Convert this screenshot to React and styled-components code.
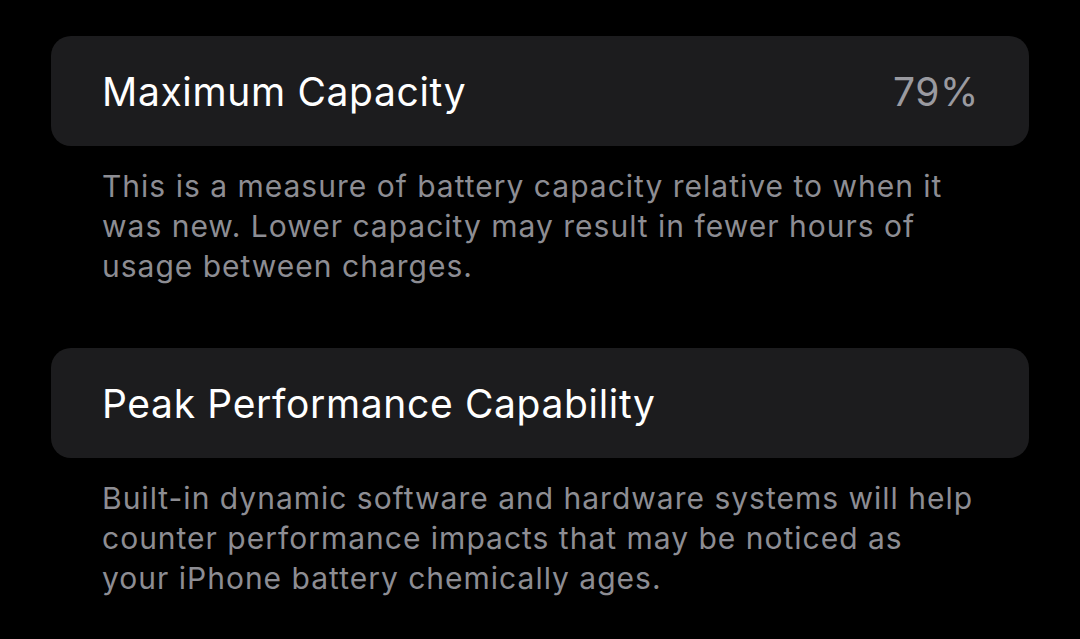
import React from "react";
import styled, { createGlobalStyle } from "styled-components";

const Global = createGlobalStyle`
  html, body {
    margin: 0;
    padding: 0;
    background: #000;
  }
  body {
    font-family: Inter, "Noto Sans", "Liberation Sans", sans-serif;
    -webkit-font-smoothing: antialiased;
  }
`;

const Screen = styled.div`
  width: 1080px;
  height: 639px;
  background: #000;
  box-sizing: border-box;
  padding: 36px 51px 0;
  display: flex;
  flex-direction: column;
  overflow: hidden;
`;

const Section = styled.section`
  display: flex;
  flex-direction: column;
  margin-bottom: ${(p) => p.$gap || 0}px;
`;

const Card = styled.div`
  height: 110px;
  background: #1c1c1e;
  border-radius: 20px;
  display: flex;
  align-items: center;
  justify-content: space-between;
  padding: 0 50px 0 51px;
  box-sizing: border-box;
`;

const Title = styled.span`
  color: #fff;
  font-size: 39px;
  font-weight: 400;
  letter-spacing: 0.65px;
`;

const Value = styled.span`
  color: #9a9aa0;
  font-size: 39px;
  font-weight: 400;
  letter-spacing: 0.65px;
`;

const Footer = styled.p`
  margin: 0;
  padding: 20px 51px 0;
  color: #8d8d93;
  font-size: 30px;
  line-height: 40px;
  letter-spacing: 1px;
`;

export default function App() {
  return (
    <>
      <Global />
      <Screen>
        <Section $gap={62}>
          <Card>
            <Title>Maximum Capacity</Title>
            <Value>79%</Value>
          </Card>
          <Footer>
            This is a measure of battery capacity relative to when it
            <br />
            was new. Lower capacity may result in fewer hours of
            <br />
            usage between charges.
          </Footer>
        </Section>
        <Section>
          <Card>
            <Title>Peak Performance Capability</Title>
          </Card>
          <Footer>
            Built-in dynamic software and hardware systems will help
            <br />
            counter performance impacts that may be noticed as
            <br />
            your iPhone battery chemically ages.
          </Footer>
        </Section>
      </Screen>
    </>
  );
}
